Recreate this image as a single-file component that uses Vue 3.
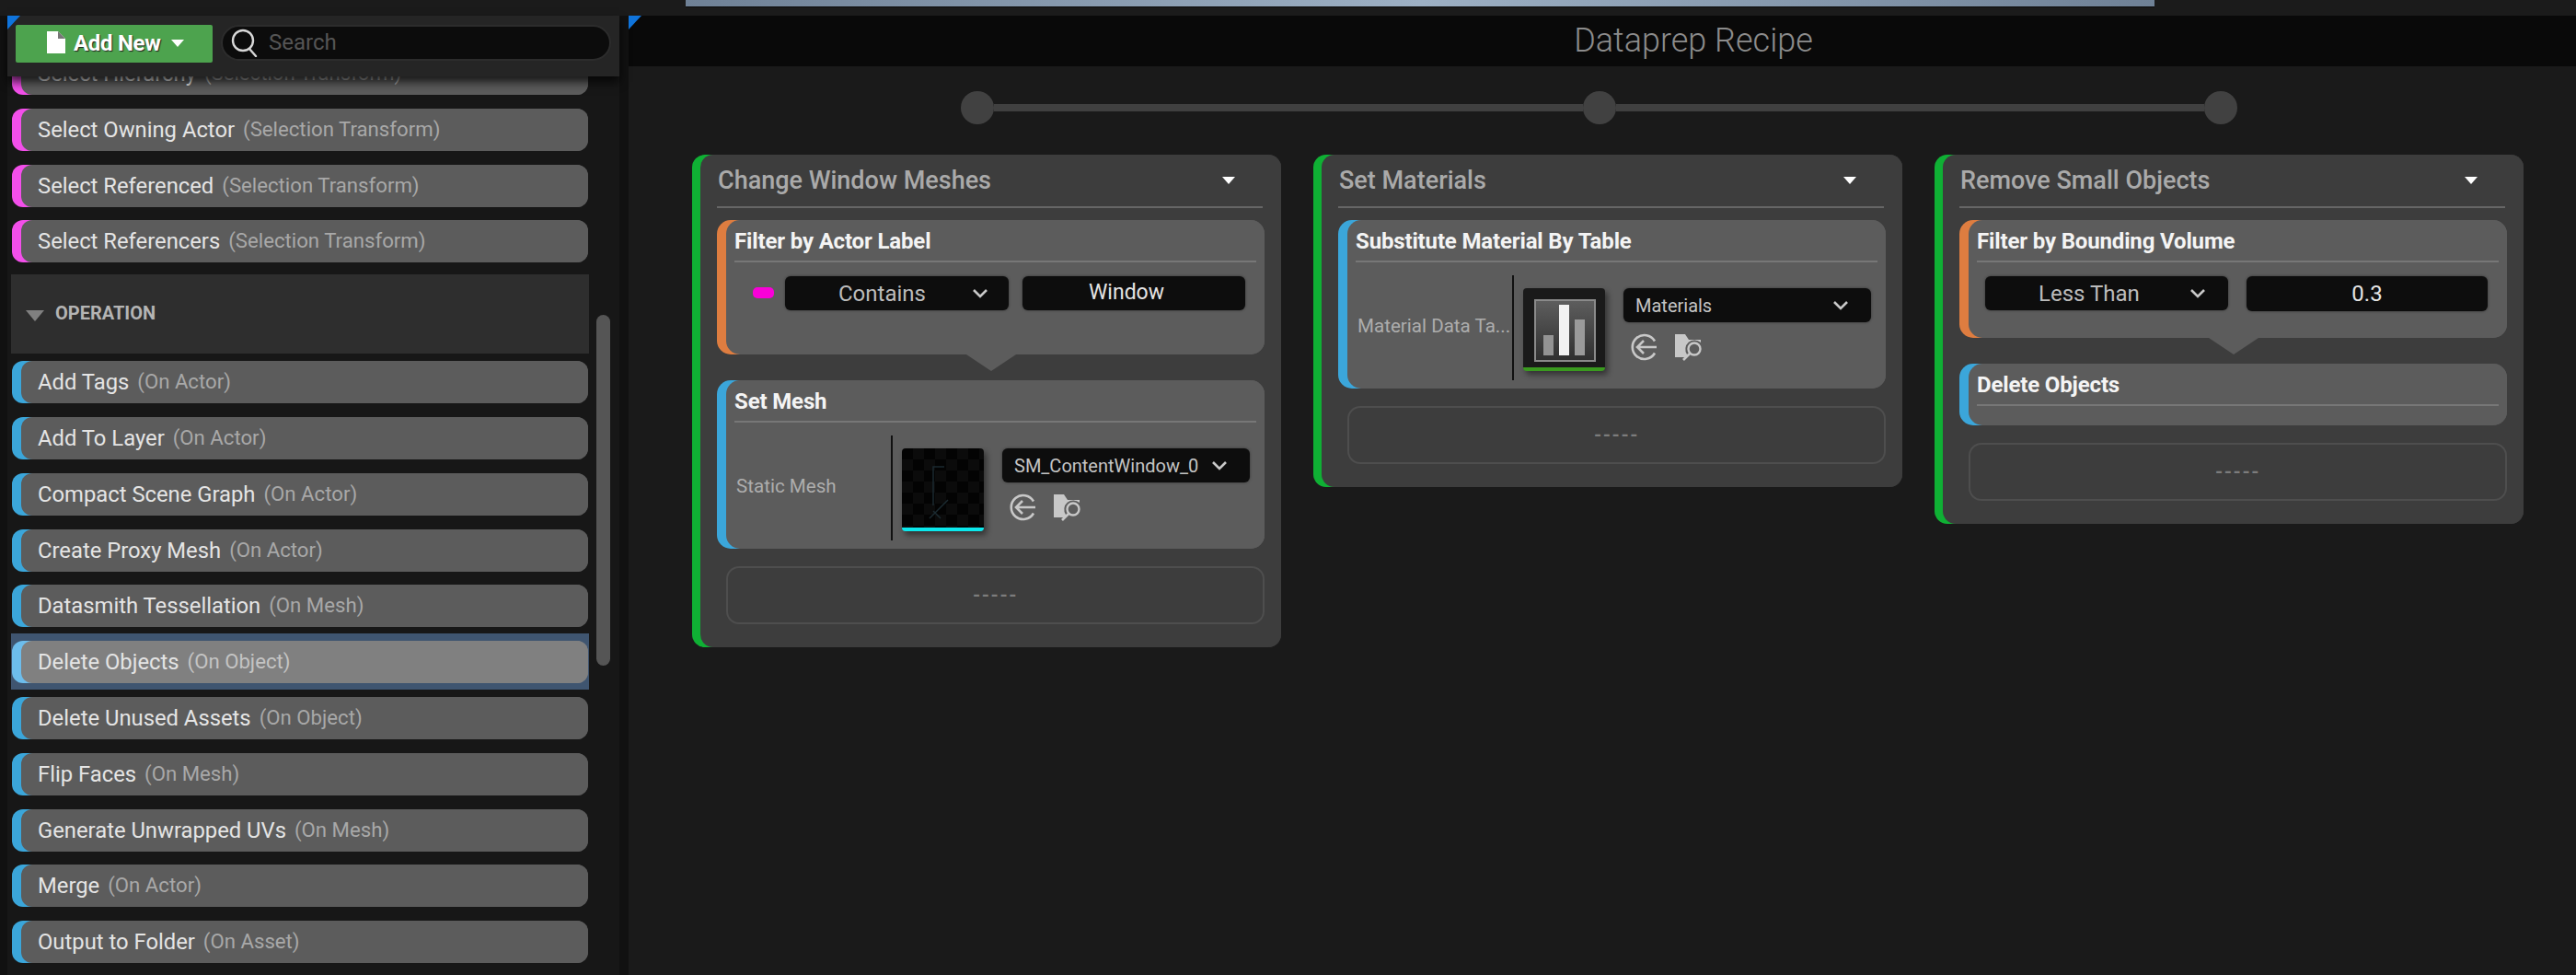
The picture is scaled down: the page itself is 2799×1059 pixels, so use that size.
<script setup>
const selectionItems = [
  { name: 'Select Hierarchy', kind: '(Selection Transform)' },
  { name: 'Select Owning Actor', kind: '(Selection Transform)' },
  { name: 'Select Referenced', kind: '(Selection Transform)' },
  { name: 'Select Referencers', kind: '(Selection Transform)' },
];

const operationItems = [
  { name: 'Add Tags', kind: '(On Actor)' },
  { name: 'Add To Layer', kind: '(On Actor)' },
  { name: 'Compact Scene Graph', kind: '(On Actor)' },
  { name: 'Create Proxy Mesh', kind: '(On Actor)' },
  { name: 'Datasmith Tessellation', kind: '(On Mesh)' },
  { name: 'Delete Objects', kind: '(On Object)', selected: true },
  { name: 'Delete Unused Assets', kind: '(On Object)' },
  { name: 'Flip Faces', kind: '(On Mesh)' },
  { name: 'Generate Unwrapped UVs', kind: '(On Mesh)' },
  { name: 'Merge', kind: '(On Actor)' },
  { name: 'Output to Folder', kind: '(On Asset)' },
];
</script>

<template>
  <div class="app">
    <div class="topbar">
      <div class="tab-strip"></div>
    </div>

    <div class="workspace">
      <aside class="palette">
        <span class="corner"></span>
        <div class="toolbar">
          <button class="add-new">
            <svg class="file-icon" width="22" height="25" viewBox="0 0 22 25">
              <path d="M1 0h12l8 8v16H1z" fill="#fff" />
              <path d="M13 0v8h8z" fill="#777" />
            </svg>
            <span>Add New</span>
            <i class="add-caret"></i>
          </button>
          <div class="search">
            <svg width="30" height="32" viewBox="0 0 30 32" fill="none" stroke="#d8d8d8" stroke-width="2.4">
              <circle cx="14" cy="14" r="11" />
              <path d="M21 23l7 8" stroke-linecap="round" />
            </svg>
            <span>Search</span>
          </div>
        </div>

        <div class="list-viewport">
          <div class="list">
            <div v-for="item in selectionItems" :key="item.name" class="row">
              <div class="item pink">
                <div class="item-body">
                  <span class="item-name">{{ item.name }}</span>
                  <span class="item-kind">{{ item.kind }}</span>
                </div>
              </div>
            </div>

            <div class="section">
              <i class="section-caret"></i>
              <span>OPERATION</span>
            </div>

            <div
              v-for="item in operationItems"
              :key="item.name"
              class="row"
              :class="{ selected: item.selected }"
            >
              <div class="item blue">
                <div class="item-body">
                  <span class="item-name">{{ item.name }}</span>
                  <span class="item-kind">{{ item.kind }}</span>
                </div>
              </div>
            </div>
          </div>
          <div class="scrollbar"></div>
        </div>
      </aside>

      <main class="recipe">
        <span class="corner"></span>
        <header class="recipe-title">Dataprep Recipe</header>

        <div class="timeline">
          <i class="dot"></i><i class="line"></i><i class="dot"></i><i class="line"></i><i class="dot"></i>
        </div>

        <div class="cards">
          <section class="card">
            <div class="card-head">
              <span>Change Window Meshes</span>
              <i class="card-caret"></i>
            </div>

            <div class="block orange has-notch">
              <div class="block-title">Filter by Actor Label</div>
              <div class="filter-body tall">
                <i class="pill"></i>
                <div class="combo contains">
                  <span>Contains</span>
                  <svg class="chevron" width="18" height="12" viewBox="0 0 18 12"><path d="M2 2l7 7 7-7" /></svg>
                </div>
                <div class="field window-field">Window</div>
              </div>
            </div>

            <div class="block blue">
              <div class="block-title">Set Mesh</div>
              <div class="param">
                <div class="param-label">Static Mesh</div>
                <div class="param-value">
                  <div class="thumb mesh">
                    <svg width="89" height="86" viewBox="0 0 89 86" fill="none" stroke="#1b2a30" stroke-width="1.5">
                      <path d="M34 62V20h12M30 76l20-20M34 68l8 8" />
                    </svg>
                  </div>
                  <div class="asset">
                    <div class="combo asset-combo">
                      <span>SM_ContentWindow_0</span>
                      <svg class="chevron" width="18" height="12" viewBox="0 0 18 12"><path d="M2 2l7 7 7-7" /></svg>
                    </div>
                    <div class="asset-tools">
                      <svg width="30" height="30" viewBox="0 0 30 30" fill="none" stroke="#c8c8c8" stroke-width="2.6">
                        <path d="M27 8.5A13 13 0 1 0 27 21.5" />
                        <path d="M29 15H9M15 8l-7 7 7 7" />
                      </svg>
                      <svg width="31" height="30" viewBox="0 0 31 30">
                        <path d="M1 1h11l4 6h13v3a10 10 0 0 0-15 13l1 3H1z" fill="#c8c8c8" />
                        <circle cx="22" cy="17" r="6.5" fill="none" stroke="#c8c8c8" stroke-width="2.4" />
                        <path d="M17 22l-7 7" stroke="#c8c8c8" stroke-width="2.6" />
                      </svg>
                    </div>
                  </div>
                </div>
              </div>
            </div>

            <div class="slot">-----</div>
          </section>

          <section class="card">
            <div class="card-head">
              <span>Set Materials</span>
              <i class="card-caret"></i>
            </div>

            <div class="block blue">
              <div class="block-title">Substitute Material By Table</div>
              <div class="param">
                <div class="param-label">Material Data Ta...</div>
                <div class="param-value">
                  <div class="thumb table">
                    <svg width="89" height="86" viewBox="0 0 89 86">
                      <defs>
                        <linearGradient id="tableBg" x1="0" y1="0" x2="0" y2="1">
                          <stop offset="0" stop-color="#5e5e5e" />
                          <stop offset="1" stop-color="#2f2f2f" />
                        </linearGradient>
                      </defs>
                      <rect x="13" y="13" width="65" height="66" fill="url(#tableBg)" stroke="#8a8a8a" stroke-width="2" />
                      <rect x="22" y="51" width="11" height="22" fill="#939393" />
                      <rect x="39" y="18" width="11" height="55" fill="#f2f2f2" />
                      <rect x="56" y="34" width="11" height="39" fill="#9a9a9a" />
                    </svg>
                  </div>
                  <div class="asset">
                    <div class="combo asset-combo">
                      <span>Materials</span>
                      <svg class="chevron" width="18" height="12" viewBox="0 0 18 12"><path d="M2 2l7 7 7-7" /></svg>
                    </div>
                    <div class="asset-tools">
                      <svg width="30" height="30" viewBox="0 0 30 30" fill="none" stroke="#c8c8c8" stroke-width="2.6">
                        <path d="M27 8.5A13 13 0 1 0 27 21.5" />
                        <path d="M29 15H9M15 8l-7 7 7 7" />
                      </svg>
                      <svg width="31" height="30" viewBox="0 0 31 30">
                        <path d="M1 1h11l4 6h13v3a10 10 0 0 0-15 13l1 3H1z" fill="#c8c8c8" />
                        <circle cx="22" cy="17" r="6.5" fill="none" stroke="#c8c8c8" stroke-width="2.4" />
                        <path d="M17 22l-7 7" stroke="#c8c8c8" stroke-width="2.6" />
                      </svg>
                    </div>
                  </div>
                </div>
              </div>
            </div>

            <div class="slot">-----</div>
          </section>

          <section class="card">
            <div class="card-head">
              <span>Remove Small Objects</span>
              <i class="card-caret"></i>
            </div>

            <div class="block orange has-notch">
              <div class="block-title">Filter by Bounding Volume</div>
              <div class="filter-body wide">
                <div class="combo less-than">
                  <span>Less Than</span>
                  <svg class="chevron" width="18" height="12" viewBox="0 0 18 12"><path d="M2 2l7 7 7-7" /></svg>
                </div>
                <div class="field">0.3</div>
              </div>
            </div>

            <div class="block blue">
              <div class="block-title">Delete Objects</div>
              <div class="empty-body"></div>
            </div>

            <div class="slot">-----</div>
          </section>
        </div>
      </main>
    </div>
  </div>
</template>

<style>
html,
body {
  margin: 0;
  background: #111;
}
</style>

<style scoped>
.app {
  width: 2799px;
  height: 1059px;
  overflow: hidden;
  background: #111;
  font-family: Roboto, "Liberation Sans", sans-serif;
  color: #ddd;
}

.topbar {
  height: 17px;
  padding-left: 745px;
  background: #1b1b1b;
  box-sizing: border-box;
}

.tab-strip {
  width: 1596px;
  height: 7px;
  background: linear-gradient(90deg, #6f8196, #9db0c4 50%, #6f8196);
  border-bottom: 1px solid #0a0a0a;
}

.workspace {
  display: flex;
  height: 1042px;
}

.corner {
  position: absolute;
  left: 0;
  top: 0;
  z-index: 3;
  width: 14px;
  height: 15px;
  background: #0f74dc;
  clip-path: polygon(0 0, 100% 0, 0 100%);
}

/* left palette */
.palette {
  position: relative;
  width: 665px;
  margin-left: 8px;
  display: flex;
  flex-direction: column;
  background: #171717;
}

.toolbar {
  position: relative;
  z-index: 2;
  height: 66px;
  display: flex;
  gap: 9px;
  padding: 10px 9px 0;
  box-sizing: border-box;
  background: #252525;
  box-shadow: 0 6px 10px rgba(0, 0, 0, 0.75);
}

.add-new {
  width: 214px;
  height: 41px;
  display: flex;
  align-items: center;
  padding: 0 0 2px 33px;
  box-sizing: border-box;
  border: 0;
  border-radius: 2px;
  background: #4da34e;
  color: #fff;
  font: 700 24px Roboto, sans-serif;
  letter-spacing: -0.3px;
  text-shadow: 1px 1px 1px #222;
}

.file-icon {
  margin-right: 8px;
}

.add-caret {
  width: 0;
  height: 0;
  margin-left: 11px;
  border-left: 7px solid transparent;
  border-right: 7px solid transparent;
  border-top: 8px solid #fff;
}

.search {
  width: 424px;
  height: 39px;
  display: flex;
  align-items: center;
  gap: 12px;
  padding: 0 0 2px 8px;
  box-sizing: border-box;
  border: 2px solid #2c2c2c;
  border-radius: 20px;
  background: #0c0c0c;
  color: #555;
  font-size: 24px;
}

.list-viewport {
  position: relative;
  flex: 1;
  overflow: hidden;
}

.list {
  width: 628px;
  margin: -34px 0 0 4px;
}

.row {
  height: 60.8px;
  padding: 8px 1px 0;
  box-sizing: border-box;
}

.row.selected {
  background: #3f5570;
}

.item {
  height: 46px;
  border-radius: 12px;
}

.item.pink {
  background: linear-gradient(90deg, #f34fea 50%, #5c5c5c 50%);
}

.item.blue {
  background: linear-gradient(90deg, #3ba6da 50%, #5c5c5c 50%);
}

.selected .item.blue {
  background: linear-gradient(90deg, #6dbdec 50%, #808080 50%);
}

.item-body {
  height: 100%;
  margin-left: 10px;
  display: flex;
  align-items: center;
  gap: 9px;
  padding-left: 18px;
  border-radius: 12px;
  background: #5c5c5c;
  white-space: nowrap;
}

.selected .item-body {
  background: #808080;
}

.item-name {
  font-size: 23.8px;
  color: #e4e4e4;
}

.item-kind {
  position: relative;
  top: -1px;
  font-size: 22.2px;
  color: #a8a8a8;
}

.selected .item-kind {
  color: #c4c4c4;
}

.section {
  height: 86px;
  margin-top: 6px;
  display: flex;
  align-items: center;
  gap: 12px;
  padding: 0 0 2px 16px;
  box-sizing: border-box;
  background: #2e2e2e;
  color: #b4b4b4;
  font-size: 20px;
  font-weight: 700;
}

.section-caret {
  width: 0;
  height: 0;
  margin-top: 6px;
  border-left: 10px solid transparent;
  border-right: 10px solid transparent;
  border-top: 12px solid #808080;
}

.scrollbar {
  position: absolute;
  left: 640px;
  top: 259px;
  width: 15px;
  height: 381px;
  border-radius: 8px;
  background: #555;
}

/* recipe canvas */
.recipe {
  position: relative;
  flex: 1;
  margin-left: 10px;
  background: #1a1a1a;
}

.recipe-title {
  height: 55px;
  padding-left: 198px;
  text-align: center;
  line-height: 55px;
  background: #090909;
  color: #8c8c8c;
  font-size: 36px;
  font-weight: 300;
}

.timeline {
  display: flex;
  align-items: center;
  width: 1387px;
  height: 36px;
  margin: 27px 0 0 361px;
}

.dot {
  width: 36px;
  height: 36px;
  border-radius: 50%;
  background: #414141;
}

.line {
  flex: 1;
  height: 8px;
  background: #404040;
}

.cards {
  display: flex;
  align-items: flex-start;
  gap: 35px;
  margin: 33px 0 0 69px;
}

.card {
  width: 640px;
  padding: 0 18px 25px 27px;
  box-sizing: border-box;
  border-radius: 14px;
  background: linear-gradient(90deg, #0fb034 50%, #3d3d3d 50%);
  position: relative;
  isolation: isolate;
}

.card::before {
  content: "";
  position: absolute;
  z-index: -1;
  inset: 0 0 0 9px;
  border-radius: 14px;
  background: #3d3d3d;
}

.card-head {
  height: 58px;
  display: flex;
  align-items: center;
  justify-content: space-between;
  padding: 0 30px 0 1px;
  box-sizing: border-box;
  margin-right: 2px;
  border-bottom: 2px solid #666;
  color: #aaa;
  font-size: 27px;
  font-weight: 500;
}

.card-caret {
  width: 0;
  height: 0;
  border-left: 7px solid transparent;
  border-right: 7px solid transparent;
  border-top: 8px solid #fff;
}

.block {
  position: relative;
  margin-top: 13px;
  padding-left: 19px;
  border-radius: 15px;
}

.block.orange {
  background: linear-gradient(90deg, #de7d40 50%, #5c5c5c 50%);
}

.block.blue {
  background: linear-gradient(90deg, #3ba6da 50%, #5c5c5c 50%);
}

.block::before {
  content: "";
  position: absolute;
  inset: 0 0 0 10px;
  border-radius: 15px;
  background: #5c5c5c;
}

.block > * {
  position: relative;
}

.block.has-notch {
  margin-bottom: 28px;
}

.block.has-notch + .block {
  margin-top: 0;
}

.block.has-notch::after {
  content: "";
  position: absolute;
  left: 271px;
  top: 100%;
  border-left: 27px solid transparent;
  border-right: 27px solid transparent;
  border-top: 18px solid #5c5c5c;
}

.block-title {
  height: 46px;
  margin-right: 9px;
  box-sizing: border-box;
  border-bottom: 2px solid #777;
  line-height: 47px;
  color: #f4f4f4;
  font-size: 24px;
  font-weight: 700;
  letter-spacing: -0.15px;
}

.filter-body {
  display: flex;
  align-items: flex-start;
  padding-top: 15px;
  box-sizing: border-box;
}

.filter-body.tall {
  height: 100px;
  gap: 12px;
  padding-left: 20px;
}

.filter-body.wide {
  height: 82px;
  gap: 20px;
  padding-left: 9px;
}

.pill {
  width: 23px;
  height: 12px;
  margin-top: 12px;
  border-radius: 5px;
  background: #f900d8;
}

.combo {
  position: relative;
  height: 37px;
  display: flex;
  align-items: center;
  box-sizing: border-box;
  border-radius: 6px;
  background: #0d0d0d;
  color: #bcbcbc;
  font-size: 24px;
  box-shadow: 0 0 3px rgba(0, 0, 0, 0.45);
}

.chevron {
  position: absolute;
  fill: none;
  stroke: #c8c8c8;
  stroke-width: 2.6;
}

.contains {
  width: 243px;
  padding-left: 58px;
}

.contains .chevron {
  left: 203px;
}

.less-than {
  width: 264px;
  padding-left: 58px;
}

.less-than .chevron {
  left: 222px;
}

.field {
  width: 262px;
  height: 38px;
  border-radius: 6px;
  background: #0d0d0d;
  text-align: center;
  line-height: 38px;
  color: #e4e4e4;
  font-size: 24px;
  box-shadow: 0 0 3px rgba(0, 0, 0, 0.45);
}

.window-field {
  width: 242px;
  height: 37px;
  margin-left: 3px;
  padding-right: 16px;
  box-sizing: border-box;
  line-height: 35px;
  font-size: 23px;
}

.param {
  display: flex;
  height: 137px;
  padding-top: 14px;
  box-sizing: border-box;
}

.param-label {
  width: 170px;
  height: 114px;
  margin-left: 2px;
  box-sizing: border-box;
  border-right: 2px solid #111;
  white-space: nowrap;
  line-height: 110px;
  color: #adadad;
  font-size: 20.6px;
}

.param-value {
  display: flex;
  gap: 20px;
  padding: 14px 0 0 10px;
}

.thumb {
  position: relative;
  width: 89px;
  height: 90px;
  box-sizing: border-box;
  border-radius: 4px;
  box-shadow: 3px 4px 6px rgba(0, 0, 0, 0.45);
}

.thumb svg {
  display: block;
}

.thumb.mesh {
  border-bottom: 4px solid #0be8ec;
  background: repeating-conic-gradient(#0b0b0b 0 25%, #030303 0 50%) 0 0 / 24px 24px;
}

.thumb.table {
  border-bottom: 4px solid #3a9a1f;
  background: #1a1a1a;
}

.asset {
  width: 269px;
}

.asset-combo {
  padding-left: 13px;
  font-size: 20px;
  color: #c4c4c4;
}

.asset-combo .chevron {
  left: 227px;
}

.asset-tools {
  display: flex;
  gap: 18px;
  margin-top: 12px;
  padding-left: 7px;
}

.empty-body {
  height: 21px;
}

.slot {
  height: 63px;
  margin: 19px 0 0 10px;
  box-sizing: border-box;
  border: 2px solid #4e4e4e;
  border-radius: 14px;
  text-align: center;
  line-height: 58px;
  color: #7c7c7c;
  font-size: 21px;
  font-weight: 700;
  letter-spacing: 1.5px;
}
</style>
